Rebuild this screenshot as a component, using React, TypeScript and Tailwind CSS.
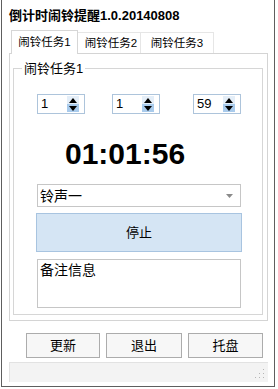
import React from "react";

const font = "font-['Liberation_Sans','Noto_Sans_CJK_SC',sans-serif]";

const Spinner = ({ value, className }: { value: string; className: string }) => (
  <div className={`flex h-[20px] w-[48px] items-center border border-[#adc4db] bg-white ${className}`}>
    <span className="w-[29px] pl-[3px] text-[13px] leading-[14px] text-black">{value}</span>
    <div className="flex h-[16px] w-[12px] flex-col">
      <div className="flex h-[8px] items-center justify-center bg-[#e4eef8]">
        <svg width="8" height="5" viewBox="0 0 8 5">
          <path d="M0 5 L4 0 L8 5 Z" fill="#000" />
        </svg>
      </div>
      <div className="flex h-[8px] items-center justify-center bg-[#a9cbec]">
        <svg width="8" height="5" viewBox="0 0 8 5">
          <path d="M0 0 L8 0 L4 5 Z" fill="#000" />
        </svg>
      </div>
    </div>
  </div>
);

export default function App() {
  return (
    <div className={`h-[389px] w-[278px] bg-white ${font} text-black`}>
      <div className="ml-px flex h-[387px] w-[274px] flex-col border-x border-b border-[#5e5e5e] bg-white">
        {/* title */}
        <div className="h-[30px] pl-[7px] pt-[8px] text-[13px] font-bold leading-[15px]">
          倒计时闹铃提醒1.0.20140808
        </div>

        {/* tabs */}
        <div className="relative z-10 flex h-[23px] items-end pl-[9px] text-[11.5px] leading-[14px]">
          <div className="-mb-px flex h-[24px] w-[67px] items-center justify-center border-x border-t border-[#d6d6d6] bg-white pb-[2px]">
            闹铃任务1
          </div>
          <div className="flex h-[21px] w-[63px] items-center justify-center border-r border-t border-[#e6e6e6] bg-white pl-[4px]">
            闹铃任务2
          </div>
          <div className="flex h-[21px] w-[73px] items-center justify-center border-r border-t border-[#e6e6e6] bg-white">
            闹铃任务3
          </div>
        </div>

        {/* tab panel */}
        <div className="ml-[7px] h-[268px] w-[259px] border border-[#d4d4d4] pl-[3px] pt-[7px]">
          <fieldset className="h-[254px] w-[250px] border border-[#d6d6d6] shadow-[inset_1px_1px_0_#fff,1px_1px_0_#fff]">
            <legend className="ml-[8px] px-[2px] text-[13px] leading-[15px]">闹铃任务1</legend>
            <div className="flex pt-[18px]">
              <Spinner value="1" className="ml-[23px]" />
              <Spinner value="1" className="ml-[27px]" />
              <Spinner value="59" className="ml-[33px]" />
            </div>
            <div className="ml-[51px] mt-[25px] font-['Liberation_Sans',sans-serif] text-[30px] font-bold leading-[30px]">
              01:01:56
            </div>
            <div className="ml-[23px] mt-[15px] flex h-[23px] w-[204px] items-center justify-between border border-[#c6c6c6] bg-white pl-[2px] pr-[7px]">
              <span className="text-[14px] leading-[16px]">铃声一</span>
              <svg width="7" height="4" viewBox="0 0 7 4">
                <path d="M0 0 L7 0 L3.5 4 Z" fill="#8a8a8a" />
              </svg>
            </div>
            <div className="ml-[22px] mt-[6px] flex h-[39px] w-[206px] items-center justify-center border border-[#a8c4e0] bg-[#d5e5f4] text-[13px]">
              停止
            </div>
            <div className="ml-[23px] mt-[7px] h-[49px] w-[204px] border border-[#c6c6c6] bg-white pl-[2px] pt-[2px] text-[14px] leading-[16px]">
              备注信息
            </div>
          </fieldset>
        </div>

        {/* buttons */}
        <div className="ml-[24px] mt-[12px] flex gap-[6px] text-[13px]">
          <div className="flex h-[25px] w-[74px] items-center justify-center border border-[#acacac] bg-[#f7f7f7]">
            更新
          </div>
          <div className="flex h-[25px] w-[76px] items-center justify-center border border-[#acacac] bg-[#f7f7f7]">
            退出
          </div>
          <div className="flex h-[25px] w-[75px] items-center justify-center border border-[#acacac] bg-[#f7f7f7]">
            托盘
          </div>
        </div>

        {/* status bar */}
        <div className="ml-[7px] mt-[4px] flex h-[20px] w-[259px] items-end justify-end border-l border-t border-[#e2e2e2] bg-[#f3f3f3] pb-[3px] pr-[3px]">
          <svg width="10" height="10" viewBox="0 0 10 10">
            <rect x="8" y="0" width="1" height="1" fill="#b5b5b5" />
            <rect x="8" y="4" width="1" height="1" fill="#b5b5b5" />
            <rect x="4" y="4" width="1" height="1" fill="#b5b5b5" />
            <rect x="8" y="8" width="1" height="1" fill="#b5b5b5" />
            <rect x="4" y="8" width="1" height="1" fill="#b5b5b5" />
            <rect x="0" y="8" width="1" height="1" fill="#b5b5b5" />
          </svg>
        </div>
      </div>
    </div>
  );
}
